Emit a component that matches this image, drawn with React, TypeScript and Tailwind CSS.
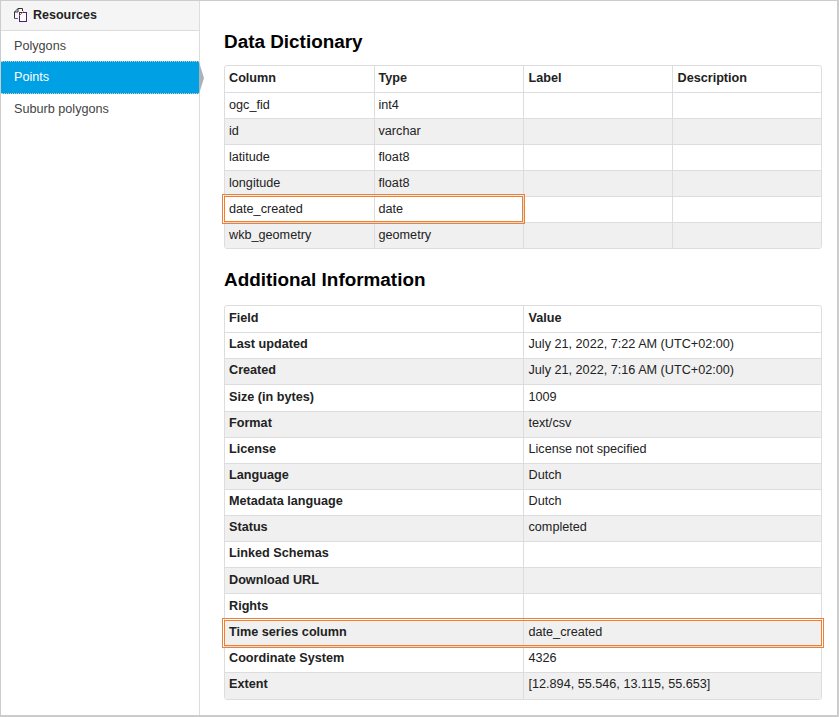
const sans = "font-['Liberation_Sans',Arial,sans-serif]"

const resources = ["Polygons", "Points", "Suburb polygons"]

const columns = [
  ["ogc_fid", "int4"],
  ["id", "varchar"],
  ["latitude", "float8"],
  ["longitude", "float8"],
  ["date_created", "date"],
  ["wkb_geometry", "geometry"],
]

const info = [
  ["Last updated", "July 21, 2022, 7:22 AM (UTC+02:00)"],
  ["Created", "July 21, 2022, 7:16 AM (UTC+02:00)"],
  ["Size (in bytes)", "1009"],
  ["Format", "text/csv"],
  ["License", "License not specified"],
  ["Language", "Dutch"],
  ["Metadata language", "Dutch"],
  ["Status", "completed"],
  ["Linked Schemas", ""],
  ["Download URL", ""],
  ["Rights", ""],
  ["Time series column", "date_created"],
  ["Coordinate System", "4326"],
  ["Extent", "[12.894, 55.546, 13.115, 55.653]"],
]

const cell = "border border-[#ddd] pl-[4px] pr-[4px] pt-0 text-left align-middle"
const dictCell = `${cell} h-[26.07px] pb-0`
const infoCell = `${cell} h-[26.15px] pb-[2px]`

function ResourcesIcon() {
  return (
    <svg width="14" height="14" viewBox="0 0 14 14" fill="none" className="shrink-0">
      <path d="M0.5 10.5V4L4 0.5H8.5V3" stroke="#333" />
      <path d="M4 0.5V4H0.5" stroke="#333" />
      <path d="M0.5 10.5H4" stroke="#6a4a8a" />
      <rect x="5.5" y="4.5" width="7" height="9" fill="#fff" stroke="#4b1f7a" />
      <path d="M5 8L9.5 3.5" stroke="#b06a2c" />
    </svg>
  )
}

function Highlight({ className }: { className: string }) {
  return (
    <div className={`absolute left-[-2px] h-[30px] border border-[#f0802f] p-px ${className}`}>
      <div className="h-full w-full border border-[#f0802f]" />
    </div>
  )
}

export default function App() {
  return (
    <div className={`${sans} flex h-[717px] w-[839px] border border-[#ccc] border-b-2 border-r-2 bg-white text-[12.65px] leading-none text-[#333]`}>
      <aside className="w-[199px] shrink-0 border-r border-[#ddd]">
        <div className="flex h-[30px] items-center gap-[5px] border-b border-[#ddd] bg-[#f5f5f5] pb-[1px] pl-[13px] text-[12.5px] font-bold text-[#222]">
          <ResourcesIcon />
          Resources
        </div>
        <ul>
          {resources.map((name) =>
            name === "Points" ? (
              <li key={name} className="relative flex h-[33px] items-center border-y border-dotted border-[#ccc] bg-[#00a1e4] pb-[1px] pl-[13px] text-white">
                {name}
                <span className="absolute left-full top-1/2 -translate-y-1/2 border-y-[16px] border-l-[5px] border-y-transparent border-l-[#aab4b8]" />
              </li>
            ) : (
              <li key={name} className="flex h-[30px] items-center pl-[13px] text-[#444]">
                {name}
              </li>
            ),
          )}
        </ul>
      </aside>

      <main className="min-w-0 flex-1 px-[24px] pt-[30px]">
        <h2 className="text-[18.9px] font-bold leading-[21px] text-black">Data Dictionary</h2>
        <div className="relative mt-[13px] w-[598px]">
          <div className="overflow-hidden rounded-[3px] border border-[#ddd]">
            <table className="w-full table-fixed border-collapse border-hidden text-[#222]">
              <thead>
                <tr className="font-bold">
                  <th className={dictCell}>Column</th>
                  <th className={dictCell}>Type</th>
                  <th className={`${dictCell} pl-[5px]`}>Label</th>
                  <th className={`${dictCell} pl-[5px]`}>Description</th>
                </tr>
              </thead>
              <tbody>
                {columns.map(([col, type], i) => (
                  <tr key={col} className={i % 2 === 1 ? "bg-[#f0f0f0]" : "bg-white"}>
                    <td className={dictCell}>{col}</td>
                    <td className={dictCell}>{type}</td>
                    <td className={dictCell} />
                    <td className={dictCell} />
                  </tr>
                ))}
              </tbody>
            </table>
          </div>
          <Highlight className="top-[129px] w-[303px]" />
        </div>

        <h2 className="mt-[20px] text-[18.9px] font-bold leading-[21px] text-black">Additional Information</h2>
        <div className="relative mt-[15px] w-[598px]">
          <div className="overflow-hidden rounded-[3px] border border-[#ddd]">
            <table className="w-full table-fixed border-collapse border-hidden text-[#222]">
              <thead>
                <tr className="font-bold">
                  <th className={`${infoCell} w-[298px]`}>Field</th>
                  <th className={`${infoCell} pl-[5px]`}>Value</th>
                </tr>
              </thead>
              <tbody>
                {info.map(([field, value], i) => (
                  <tr key={field} className={i % 2 === 1 ? "bg-[#f0f0f0]" : "bg-white"}>
                    <td className={`${infoCell} font-bold`}>{field}</td>
                    <td className={`${infoCell} pl-[5px]`}>{value}</td>
                  </tr>
                ))}
              </tbody>
            </table>
          </div>
          <Highlight className="top-[313px] w-[602px]" />
        </div>
      </main>
    </div>
  )
}
